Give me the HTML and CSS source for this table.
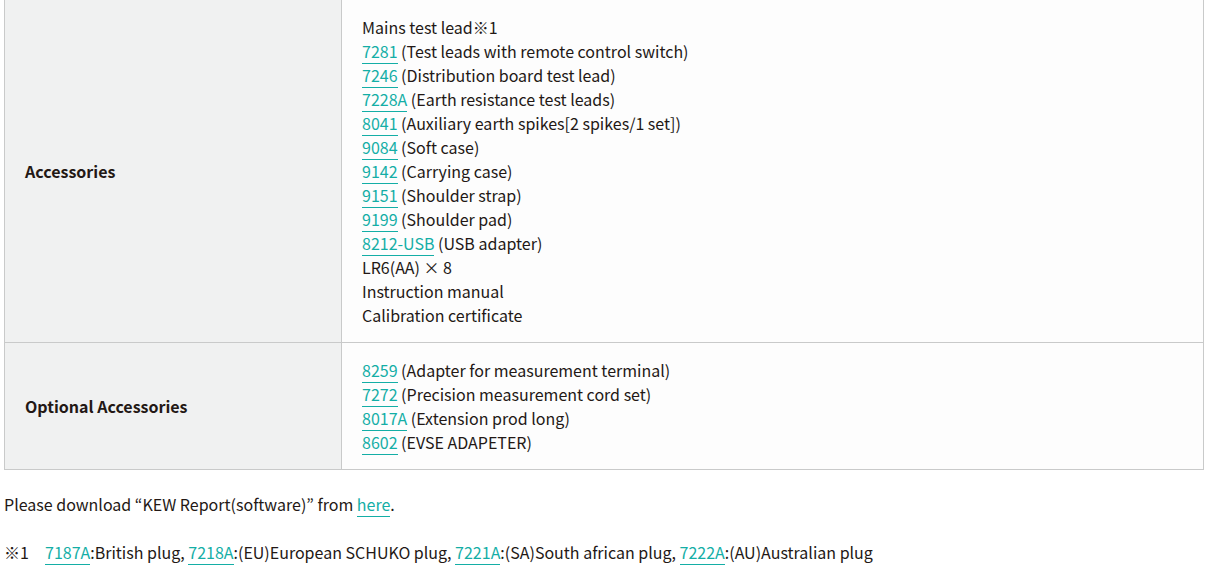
FILE: index.html
```html
<!DOCTYPE html>
<html lang="en">
<head>
<meta charset="utf-8">
<title>Accessories</title>
<link rel="stylesheet" href="styles.css">
</head>
<body>
<div class="page">
  <table class="spec">
    <tbody>
      <tr>
        <th>Accessories</th>
        <td>
          Mains test lead※1<br>
          <a href="#">7281</a> (Test leads with remote control switch)<br>
          <a href="#">7246</a> (Distribution board test lead)<br>
          <a href="#">7228A</a> (Earth resistance test leads)<br>
          <a href="#">8041</a> (Auxiliary earth spikes[2 spikes/1 set])<br>
          <a href="#">9084</a> (Soft case)<br>
          <a href="#">9142</a> (Carrying case)<br>
          <a href="#">9151</a> (Shoulder strap)<br>
          <a href="#">9199</a> (Shoulder pad)<br>
          <a href="#">8212-USB</a> (USB adapter)<br>
          LR6(AA) × 8<br>
          Instruction manual<br>
          Calibration certificate
        </td>
      </tr>
      <tr>
        <th>Optional Accessories</th>
        <td>
          <a href="#">8259</a> (Adapter for measurement terminal)<br>
          <a href="#">7272</a> (Precision measurement cord set)<br>
          <a href="#">8017A</a> (Extension prod long)<br>
          <a href="#">8602</a> (EVSE ADAPETER)
        </td>
      </tr>
    </tbody>
  </table>
  <p class="note">Please download “KEW Report(software)” from <a href="#">here</a>.</p>
  <div class="foot">
    <span class="foot-mark">※1</span>
    <span class="foot-text"><a href="#">7187A</a>:British plug, <a href="#">7218A</a>:(EU)European SCHUKO plug, <a href="#">7221A</a>:(SA)South african plug, <a href="#">7222A</a>:(AU)Australian plug</span>
  </div>
</div>
</body>
</html>
```

FILE: styles.css
```css
html, body {
  margin: 0;
  padding: 0;
  background: #ffffff;
}
body {
  font-family: "Noto Sans CJK JP", "Noto Sans", sans-serif;
  font-size: 16px;
  line-height: 1.5;
  color: #231815;
}
.page {
  padding: 0 4px 20px;
}
.spec {
  width: 1200px;
  border-collapse: collapse;
  margin-top: -1px;
}
.spec th,
.spec td {
  border: 1px solid #c9caca;
  padding: 15px 20px;
  text-align: left;
  vertical-align: middle;
}
.spec th {
  width: 296px;
  background: #f0f1f1;
  font-weight: bold;
}
.spec td {
  background: #fdfdfd;
}
a {
  color: #14aea6;
  text-decoration: none;
  border-bottom: 1px solid #14aea6;
}
.note {
  margin: 22px 0 0;
}
.foot {
  display: flex;
  margin: 24px 0 0;
}
.foot-mark {
  width: 41px;
  flex: none;
}
.foot-text a {
  display: inline-block;
  line-height: 24px;
}
```
